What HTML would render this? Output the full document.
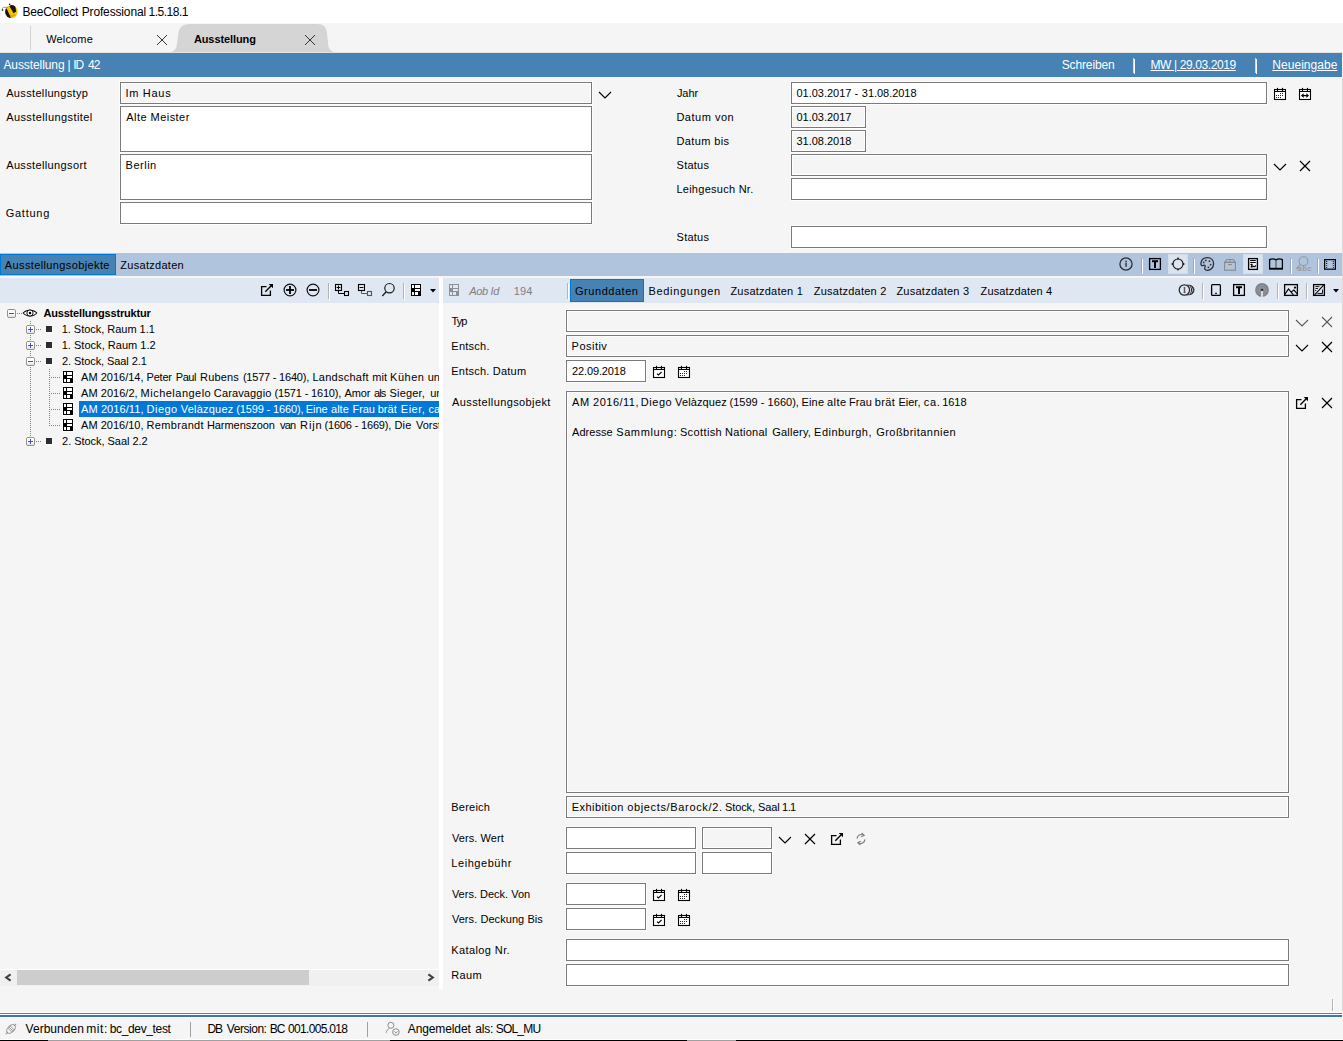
<!DOCTYPE html><html lang="de"><head><meta charset="utf-8"><title>BeeCollect Professional 1.5.18.1</title><style>
html,body{margin:0;padding:0}
body{width:1343px;height:1041px;position:relative;overflow:hidden;background:#f5f5f5;font-family:"Liberation Sans", sans-serif;font-size:11px;line-height:14px;color:#000}
#root div,#root span,#root svg{position:absolute}
#root{position:absolute;left:0;top:0;width:1343px;height:1041px;overflow:hidden}
.t{white-space:pre;font-size:11px;line-height:14px}
.f12{font-size:12px;line-height:15px}
.b{font-weight:bold}
.i{font-style:italic}
.w{color:#fff}
.g{color:#808080}
.u{text-decoration:underline;text-underline-offset:1px}
.fld{border:1px solid #7a7a7a;background:#fff;box-shadow:0 0 0 1px #fcfcfc}
.dis{background:#f5f5f5;box-shadow:0 0 0 1px #fcfcfc, inset 0 0 0 1px #fff}
</style></head><body><div id="root">
<div style="left:0px;top:0px;width:1343px;height:23px;background:#fff"></div>
<div style="left:30px;top:26px;width:1px;height:24px;background:#d4d4d4"></div>
<svg style="left:160px;top:23px" width="184" height="30" viewBox="160 23 184 30"><path d="M167 53 C172 52.6 175.6 50.4 176.6 46 L178.4 33 C179.4 27 183 24 190 24 L317 24 C324 24 326.2 27 327 33 L328.4 46 C329.4 50.4 333 52.6 338.5 53 Z" fill="#d5d5d5"/></svg>
<div style="left:0px;top:53px;width:1342px;height:24px;background:#4682b4"></div>
<div style="left:0px;top:52px;width:1342px;height:1px;background:#e6e2de"></div>
<div style="left:1133px;top:58px;width:1px;height:15px;background:#ddd6d0"></div>
<div style="left:1134px;top:59px;width:1px;height:15px;background:#fff"></div>
<div style="left:1255px;top:58px;width:1px;height:15px;background:#ddd6d0"></div>
<div style="left:1256px;top:59px;width:1px;height:15px;background:#fff"></div>
<div class="fld dis" style="left:120px;top:82px;width:470px;height:20px"></div>
<div class="fld" style="left:120px;top:106px;width:470px;height:44px"></div>
<div class="fld" style="left:120px;top:154px;width:470px;height:44px"></div>
<div class="fld" style="left:120px;top:202px;width:470px;height:20px"></div>
<div class="fld" style="left:791px;top:82px;width:474px;height:20px"></div>
<div class="fld dis" style="left:791px;top:106px;width:73px;height:20px"></div>
<div class="fld dis" style="left:791px;top:130px;width:73px;height:20px"></div>
<div class="fld dis" style="left:791px;top:154px;width:474px;height:20px"></div>
<div class="fld" style="left:791px;top:178px;width:474px;height:20px"></div>
<div class="fld" style="left:791px;top:226px;width:474px;height:20px"></div>
<div style="left:0px;top:253px;width:1342px;height:23px;background:#b0c4de"></div>
<div style="left:0px;top:254px;width:116px;height:21px;background:#4682b4;box-sizing:border-box;border:1px solid #0078d7"></div>
<div style="left:1168px;top:254px;width:20px;height:20px;background:#dce4f0;box-shadow:inset 0 0 2px 1px #d0dbeb"></div>
<div style="left:1243px;top:254px;width:20px;height:20px;background:#dce4f0;box-shadow:inset 0 0 2px 1px #d0dbeb"></div>
<div style="left:0px;top:278px;width:439px;height:25px;background:#dfe7f2"></div>
<div style="left:443px;top:278px;width:899px;height:25px;background:#dfe7f2"></div>
<div style="left:439px;top:278px;width:4px;height:711px;background:#fff"></div>
<div style="left:570px;top:279px;width:74px;height:23px;background:#4682b4;box-sizing:border-box;border:1px solid #0078d7"></div>
<div style="left:328px;top:283px;width:1px;height:16px;background:#b4b4b4"></div>
<div style="left:329px;top:284px;width:1px;height:16px;background:#fff"></div>
<div style="left:403px;top:283px;width:1px;height:16px;background:#b4b4b4"></div>
<div style="left:404px;top:284px;width:1px;height:16px;background:#fff"></div>
<div style="left:567px;top:283px;width:1px;height:16px;background:#b4b4b4"></div>
<div style="left:568px;top:284px;width:1px;height:16px;background:#fff"></div>
<div style="left:1202px;top:283px;width:1px;height:16px;background:#b4b4b4"></div>
<div style="left:1203px;top:284px;width:1px;height:16px;background:#fff"></div>
<div style="left:1277px;top:283px;width:1px;height:16px;background:#b4b4b4"></div>
<div style="left:1278px;top:284px;width:1px;height:16px;background:#fff"></div>
<div style="left:1306px;top:283px;width:1px;height:16px;background:#b4b4b4"></div>
<div style="left:1307px;top:284px;width:1px;height:16px;background:#fff"></div>
<div style="left:1141px;top:258px;width:1px;height:15px;background:#9ba6b8"></div>
<div style="left:1142px;top:259px;width:1px;height:15px;background:#fff"></div>
<div style="left:1193px;top:258px;width:1px;height:15px;background:#9ba6b8"></div>
<div style="left:1194px;top:259px;width:1px;height:15px;background:#fff"></div>
<div style="left:1290px;top:258px;width:1px;height:15px;background:#9ba6b8"></div>
<div style="left:1291px;top:259px;width:1px;height:15px;background:#fff"></div>
<div style="left:1317px;top:258px;width:1px;height:15px;background:#9ba6b8"></div>
<div style="left:1318px;top:259px;width:1px;height:15px;background:#fff"></div>
<div style="left:79px;top:401px;width:360px;height:16px;background:#0078d7"></div>
<div style="left:0px;top:969px;width:439px;height:17px;background:#f0f0f0"></div>
<div style="left:0px;top:969px;width:439px;height:1px;background:#fff"></div>
<div style="left:17px;top:970px;width:292px;height:15px;background:#cdcdcd"></div>
<div class="fld dis" style="left:566px;top:310px;width:721px;height:20px"></div>
<div class="fld dis" style="left:566px;top:335px;width:721px;height:20px"></div>
<div class="fld" style="left:566px;top:360px;width:78px;height:20px"></div>
<div class="fld dis" style="left:566px;top:391px;width:721px;height:400px"></div>
<div class="fld dis" style="left:566px;top:796px;width:721px;height:20px"></div>
<div class="fld" style="left:566px;top:827px;width:128px;height:20px"></div>
<div class="fld dis" style="left:702px;top:827px;width:68px;height:20px"></div>
<div class="fld" style="left:566px;top:852px;width:128px;height:20px"></div>
<div class="fld" style="left:702px;top:852px;width:68px;height:20px"></div>
<div class="fld" style="left:566px;top:883px;width:78px;height:20px"></div>
<div class="fld" style="left:566px;top:908px;width:78px;height:20px"></div>
<div class="fld" style="left:566px;top:939px;width:721px;height:20px"></div>
<div class="fld" style="left:566px;top:964px;width:721px;height:20px"></div>
<div style="left:1342px;top:77px;width:1px;height:935px;background:#dadada"></div>
<div style="left:0px;top:1012px;width:1342px;height:1px;background:#fff"></div>
<div style="left:0px;top:1013px;width:1342px;height:1px;background:#4a84b6"></div>
<div style="left:0px;top:1014px;width:1342px;height:1px;background:#fff"></div>
<div style="left:0px;top:1015px;width:1342px;height:2px;background:#3b78ae"></div>
<div style="left:0px;top:1017px;width:1342px;height:1px;background:#fbfbfb"></div>
<div style="left:190px;top:1022px;width:1px;height:15px;background:#a0a0a0"></div>
<div style="left:367px;top:1022px;width:1px;height:15px;background:#a0a0a0"></div>
<div style="left:1332px;top:999px;width:1px;height:12px;background:#b4b4b4"></div>
<div style="left:1333px;top:1000px;width:1px;height:12px;background:#fff"></div>
<div style="left:0px;top:1039px;width:1343px;height:1px;background:#fff"></div>
<div style="left:0px;top:1040px;width:1343px;height:1px;background:#000"></div>
<div style="left:48px;top:1040px;width:342px;height:1px;background:#a0a0a0"></div>
<div style="left:687px;top:1040px;width:49px;height:1px;background:#a0a0a0"></div>
<svg style="left:0px;top:0px" width="22" height="22" viewBox="0 0 22 22" ><defs><clipPath id="beec"><ellipse cx="11.4" cy="11.7" rx="6.3" ry="6.6"/></clipPath></defs><g clip-path="url(#beec)"><rect x="3" y="3" width="18" height="18" fill="#f6c30a"/><path d="M2 8.8 L6.6 8.4 L10.8 17.6 L9 20 L2 20 Z" fill="#17120f"/><path d="M9.3 6 L13.6 13.2 L16.2 11.4 L14.8 4 L10 3 Z" fill="#17120f"/><path d="M10 15 L12.5 16.5 L14 14.5 L15.5 16" stroke="#b8860b" stroke-width=".7" fill="none"/></g><path d="M8 7.4 L3.2 7.4 Q2.4 7.6 2.4 9" stroke="#888" stroke-width=".8" fill="none"/><ellipse cx="2.5" cy="10" rx=".8" ry="1.1" fill="#333"/><circle cx="9" cy="4.6" r="1.6" fill="#fff"/><circle cx="9.6" cy="4.4" r=".8" fill="#111"/></svg>
<svg style="left:155px;top:33px" width="14" height="14" viewBox="155 33 14 14" ><line x1="157" y1="35" x2="167" y2="45" stroke="#333" stroke-width="1.0" stroke-linecap="butt"/><line x1="167" y1="35" x2="157" y2="45" stroke="#333" stroke-width="1.0" stroke-linecap="butt"/></svg>
<svg style="left:303px;top:33px" width="14" height="14" viewBox="303 33 14 14" ><line x1="305" y1="35" x2="315" y2="45" stroke="#333" stroke-width="1.0" stroke-linecap="butt"/><line x1="315" y1="35" x2="305" y2="45" stroke="#333" stroke-width="1.0" stroke-linecap="butt"/></svg>
<svg style="left:597px;top:90px" width="16" height="10" viewBox="597 90 16 10" ><path d="M599 92 L605 98 L611 92" fill="none" stroke="#000" stroke-width="1.15" /></svg>
<svg style="left:1272px;top:86px" width="16" height="16" viewBox="1272 86 16 16" ><rect x="1273.2" y="88.2" width="13.6" height="12.6" fill="#fdfdfd" rx="1"/><rect x="1276.4" y="87" width="2.2" height="2" fill="#fdfdfd"/><rect x="1281.4" y="87" width="2.2" height="2" fill="#fdfdfd"/><rect x="1274.5" y="89.5" width="11" height="10" fill="#fff" stroke="#000" stroke-width="1.12"/><line x1="1275" y1="91.5" x2="1285" y2="91.5" stroke="#000" stroke-width="1.0" stroke-linecap="butt"/><line x1="1277.5" y1="87.8" x2="1277.5" y2="91.2" stroke="#000" stroke-width="1.1" stroke-linecap="butt"/><line x1="1282.5" y1="87.8" x2="1282.5" y2="91.2" stroke="#000" stroke-width="1.1" stroke-linecap="butt"/><circle cx="1280.5" cy="93.5" r="0.55" fill="#000"/><circle cx="1282.5" cy="93.5" r="0.55" fill="#000"/><circle cx="1276.5" cy="95.5" r="0.55" fill="#000"/><circle cx="1278.5" cy="95.5" r="0.55" fill="#000"/><circle cx="1280.5" cy="95.5" r="0.55" fill="#000"/><circle cx="1282.5" cy="95.5" r="0.55" fill="#000"/><circle cx="1276.5" cy="97.5" r="0.55" fill="#000"/><circle cx="1278.5" cy="97.5" r="0.55" fill="#000"/><circle cx="1280.5" cy="97.5" r="0.55" fill="#000"/></svg>
<svg style="left:1297px;top:86px" width="16" height="16" viewBox="1297 86 16 16" ><rect x="1298.2" y="88.2" width="13.6" height="12.6" fill="#fdfdfd" rx="1"/><rect x="1301.4" y="87" width="2.2" height="2" fill="#fdfdfd"/><rect x="1306.4" y="87" width="2.2" height="2" fill="#fdfdfd"/><rect x="1299.5" y="89.5" width="11" height="10" fill="#fff" stroke="#000" stroke-width="1.12"/><line x1="1300" y1="91.5" x2="1310" y2="91.5" stroke="#000" stroke-width="1.0" stroke-linecap="butt"/><line x1="1302.5" y1="87.8" x2="1302.5" y2="91.2" stroke="#000" stroke-width="1.1" stroke-linecap="butt"/><line x1="1307.5" y1="87.8" x2="1307.5" y2="91.2" stroke="#000" stroke-width="1.1" stroke-linecap="butt"/><line x1="1302" y1="95.6" x2="1308" y2="95.6" stroke="#000" stroke-width="1.3" stroke-linecap="butt"/><path d="M1301 95.6 L1303.6 93.2 L1303.6 98 Z" fill="#000" /><path d="M1309 95.6 L1306.4 93.2 L1306.4 98 Z" fill="#000" /></svg>
<svg style="left:1272px;top:162px" width="16" height="10" viewBox="1272 162 16 10" ><path d="M1274 164 L1280 170 L1286 164" fill="none" stroke="#000" stroke-width="1.15" /></svg>
<svg style="left:1298px;top:159px" width="14" height="14" viewBox="1298 159 14 14" ><line x1="1300" y1="161" x2="1310" y2="171" stroke="#000" stroke-width="1.15" stroke-linecap="butt"/><line x1="1310" y1="161" x2="1300" y2="171" stroke="#000" stroke-width="1.15" stroke-linecap="butt"/></svg>
<svg style="left:1118px;top:256px" width="16" height="16" viewBox="1118 256 16 16" ><circle cx="1126" cy="264" r="6.1" fill="none" stroke="#2b2b2b" stroke-width="1.25"/><rect x="1125.3" y="262.6" width="1.5" height="4.2" fill="#3a3a3a"/><rect x="1125.3" y="260.6" width="1.5" height="1.4" fill="#3a3a3a"/></svg>
<svg style="left:1148px;top:257px" width="14" height="14" viewBox="1148 257 14 14" ><rect x="1149.6" y="258.6" width="10.8" height="10.8" fill="none" stroke="#000" stroke-width="1.3"/><rect x="1152" y="260.2" width="6" height="2" fill="#000"/><rect x="1154" y="262" width="2" height="6" fill="#000"/></svg>
<svg style="left:1170px;top:256px" width="16" height="16" viewBox="1170 256 16 16" ><circle cx="1178" cy="264" r="5" fill="none" stroke="#1a1a1a" stroke-width="1.15"/><circle cx="1178" cy="258.5" r="0.95" fill="#1a1a1a"/><circle cx="1178" cy="269.6" r="0.95" fill="#1a1a1a"/><circle cx="1172.4" cy="264" r="0.95" fill="#1a1a1a"/><circle cx="1183.6" cy="264" r="0.95" fill="#1a1a1a"/></svg>
<svg style="left:1199px;top:256px" width="16" height="16" viewBox="1199 256 16 16" ><path d="M1207.4 257.6 C1211.2 257.6 1213.6 260.4 1213.6 263.8 C1213.6 267.6 1210.6 270.3 1207.4 270.3 C1204.6 270.3 1204.2 268.6 1205 267.2 C1205.8 265.8 1204.6 264.8 1203.4 265.3 C1201.6 266 1200.7 265 1200.9 263.2 C1201.3 260 1203.8 257.6 1207.4 257.6 Z" fill="none" stroke="#2b2b2b" stroke-width="1.25" /><circle cx="1205.8" cy="260.4" r="0.85" fill="#2b2b2b"/><circle cx="1209.4" cy="261.2" r="0.85" fill="#2b2b2b"/><circle cx="1210.6" cy="264.7" r="0.85" fill="#2b2b2b"/><circle cx="1208.4" cy="267.3" r="0.85" fill="#2b2b2b"/><circle cx="1203.7" cy="262.4" r="0.85" fill="#2b2b2b"/></svg>
<svg style="left:1223px;top:258px" width="14" height="14" viewBox="1223 258 14 14" ><path d="M1224.6 262.4 L1226.8 259.5 L1233.2 259.5 L1235.4 262.4 Z" fill="none" stroke="#8a8a8a" stroke-width="1.1" stroke-linejoin="round"/><rect x="1224.6" y="262.4" width="10.8" height="7.8" fill="none" stroke="#8a8a8a" stroke-width="1.1"/><line x1="1230" y1="259.5" x2="1230" y2="262.4" stroke="#8a8a8a" stroke-width="1" stroke-linecap="butt"/><line x1="1228" y1="264.6" x2="1232" y2="264.6" stroke="#8a8a8a" stroke-width="1" stroke-linecap="butt"/></svg>
<svg style="left:1247px;top:257px" width="12" height="14" viewBox="1247 257 12 14" ><rect x="1248.6" y="258.6" width="8.8" height="10.8" fill="#e9eef6" stroke="#000" stroke-width="1.3"/><line x1="1250.2" y1="260.5" x2="1255.8" y2="260.5" stroke="#000" stroke-width="1" stroke-linecap="butt"/><line x1="1250.2" y1="262.5" x2="1255.8" y2="262.5" stroke="#000" stroke-width="1" stroke-linecap="butt"/><path d="M1250.6 265 C1251.6 263.6 1252.8 264.6 1251.8 265.8 C1251 266.8 1250.4 267.2 1252.6 266.8 C1253.6 265.6 1254 266.8 1254.6 266.6 C1255.2 266.4 1255.4 265.8 1256 265.6" fill="none" stroke="#000" stroke-width="1.15" /></svg>
<svg style="left:1268px;top:257px" width="16" height="14" viewBox="1268 257 16 14" ><path d="M1269.6 259.6 Q1272.8 258.2 1276 259.8 Q1279.2 258.2 1282.4 259.6 L1282.4 268.6 L1269.6 268.6 Z" fill="none" stroke="#000" stroke-width="1.3" stroke-linejoin="round"/><line x1="1276" y1="259.8" x2="1276" y2="268.6" stroke="#444" stroke-width="1" stroke-linecap="butt"/><rect x="1269" y="267.8" width="14" height="1.8" fill="#000"/></svg>
<svg style="left:1295px;top:255px" width="18" height="18" viewBox="1295 255 18 18" ><circle cx="1303.5" cy="261.2" r="4.4" fill="none" stroke="#96989c" stroke-width="1.1"/><line x1="1300.3" y1="264.6" x2="1296.2" y2="268.8" stroke="#96989c" stroke-width="1.1" stroke-linecap="butt"/><text x="1297.6" y="270.8" font-family="Liberation Sans, sans-serif" font-size="7.6" letter-spacing=".7" fill="#96989c" stroke="#96989c" stroke-width=".2">abc</text></svg>
<svg style="left:1323px;top:258px" width="14" height="13" viewBox="1323 258 14 13" ><rect x="1324.6" y="259.6" width="10.8" height="9.6" fill="none" stroke="#000" stroke-width="1.2"/><circle cx="1326.7" cy="261.4" r="0.55" fill="#000"/><circle cx="1333.3" cy="261.4" r="0.55" fill="#000"/><circle cx="1326.7" cy="263.4" r="0.55" fill="#000"/><circle cx="1333.3" cy="263.4" r="0.55" fill="#000"/><circle cx="1326.7" cy="265.5" r="0.55" fill="#000"/><circle cx="1333.3" cy="265.5" r="0.55" fill="#000"/><circle cx="1326.7" cy="267.5" r="0.55" fill="#000"/><circle cx="1333.3" cy="267.5" r="0.55" fill="#000"/></svg>
<svg style="left:259px;top:282px" width="18" height="18" viewBox="259 282 18 18" ><path d="M266.5 286.6 L261.6 286.6 L261.6 295.4 L270.4 295.4 L270.4 290.5" fill="none" stroke="#000" stroke-width="1.3" /><line x1="265.3" y1="291.7" x2="271.5" y2="285.5" stroke="#000" stroke-width="1.4" stroke-linecap="butt"/><path d="M268.7 284 L273 284 L273 288.3 Z" fill="#000" /></svg>
<svg style="left:282px;top:282px" width="16" height="16" viewBox="282 282 16 16" ><circle cx="290" cy="290" r="5.9" fill="none" stroke="#111" stroke-width="1.2"/><rect x="286" y="289.1" width="8" height="1.8" fill="#000"/><rect x="289.1" y="286" width="1.8" height="8" fill="#000"/></svg>
<svg style="left:305px;top:282px" width="16" height="16" viewBox="305 282 16 16" ><circle cx="313" cy="290" r="5.9" fill="none" stroke="#111" stroke-width="1.2"/><rect x="309" y="289.1" width="8" height="1.8" fill="#000"/></svg>
<svg style="left:334px;top:283px" width="16" height="14" viewBox="334 283 16 14" ><rect x="335.5" y="284.5" width="6" height="6" fill="none" stroke="#000" stroke-width="1.1"/><line x1="336.6" y1="287.5" x2="340.4" y2="287.5" stroke="#000" stroke-width="1" stroke-linecap="butt"/><line x1="338.5" y1="285.6" x2="338.5" y2="289.4" stroke="#000" stroke-width="1" stroke-linecap="butt"/><path d="M338.5 291 L338.5 293.5 L344 293.5" fill="none" stroke="#000" stroke-width="1" /><rect x="344.5" y="291.5" width="4" height="4" fill="none" stroke="#000" stroke-width="1.1"/></svg>
<svg style="left:357px;top:283px" width="16" height="14" viewBox="357 283 16 14" ><rect x="358.5" y="284.5" width="6" height="6" fill="none" stroke="#000" stroke-width="1.1"/><line x1="359.6" y1="287.5" x2="363.4" y2="287.5" stroke="#000" stroke-width="1" stroke-linecap="butt"/><path d="M361.5 291 L361.5 293.5 L367 293.5" fill="none" stroke="#555" stroke-width="1" /><rect x="367.5" y="291.5" width="4" height="4" fill="none" stroke="#555" stroke-width="1.1"/></svg>
<svg style="left:381px;top:282px" width="15" height="15" viewBox="381 282 15 15" ><circle cx="389.5" cy="288.2" r="4.7" fill="none" stroke="#1a1a1a" stroke-width="1.2"/><line x1="386.2" y1="291.8" x2="382.3" y2="296" stroke="#1a1a1a" stroke-width="1.3" stroke-linecap="butt"/></svg>
<svg style="left:410px;top:283px" width="12" height="14" viewBox="410 283 12 14" ><rect x="411" y="284" width="10" height="12" fill="#000"/><rect x="412" y="285" width="2" height="3" fill="#fff"/><rect x="415" y="285" width="5" height="3" fill="#fff"/><rect x="415" y="289" width="5" height="2" fill="#fff"/><rect x="412" y="292" width="2" height="3" fill="#fff"/><rect x="415" y="292" width="3" height="3" fill="#fff"/></svg>
<svg style="left:428.5px;top:288px" width="9" height="6" viewBox="428.5 288 9 6" ><path d="M429.5 289 L435.5 289 L432.5 292.4 Z" fill="#000" /></svg>
<svg style="left:448px;top:283px" width="12" height="14" viewBox="448 283 12 14" ><rect x="449" y="284" width="10" height="12" fill="#8e9094"/><rect x="450" y="285" width="2" height="3" fill="#dfe7f2"/><rect x="453" y="285" width="5" height="3" fill="#dfe7f2"/><rect x="453" y="289" width="5" height="2" fill="#dfe7f2"/><rect x="450" y="292" width="2" height="3" fill="#dfe7f2"/><rect x="453" y="292" width="3" height="3" fill="#dfe7f2"/></svg>
<svg style="left:1178px;top:283px" width="18" height="14" viewBox="1178 283 18 14" ><circle cx="1184.4" cy="290" r="5.2" fill="none" stroke="#2a2a2a" stroke-width="1.3"/><path d="M1187.4 284.9 A5.2 5.2 0 0 1 1187.4 295.1 M1189.6 285 A5.2 5.2 0 0 1 1189.6 295 M1191.4 285.6 A5 5 0 0 1 1191.4 294.4" fill="none" stroke="#2a2a2a" stroke-width="1" /><text x="1182.6" y="292.6" font-family="Liberation Serif, serif" font-size="7.5" font-weight="bold" fill="#3a3a3a">1</text></svg>
<svg style="left:1210px;top:283px" width="12" height="14" viewBox="1210 283 12 14" ><rect x="1211.6" y="284.6" width="8.8" height="10.8" fill="none" stroke="#000" stroke-width="1.3" rx="1"/><rect x="1215" y="292.8" width="2" height="1" fill="#000"/></svg>
<svg style="left:1232px;top:283px" width="14" height="14" viewBox="1232 283 14 14" ><rect x="1233.6" y="284.6" width="10.8" height="10.8" fill="none" stroke="#000" stroke-width="1.3"/><rect x="1236" y="286.2" width="6" height="2" fill="#000"/><rect x="1238" y="288" width="2" height="6" fill="#000"/></svg>
<svg style="left:1254px;top:282px" width="16" height="16" viewBox="1254 282 16 16" ><circle cx="1262" cy="290" r="6.9" fill="#808389"/><circle cx="1262" cy="290" r="4.6" fill="none" stroke="#9ba0a8" stroke-width="0.7"/><circle cx="1262" cy="290" r="2.8" fill="none" stroke="#9ba0a8" stroke-width="0.7"/><rect x="1261.2" y="290" width="1.6" height="7.2" fill="#e8edf5"/><circle cx="1262" cy="290" r="1.1" fill="#16181c"/></svg>
<svg style="left:1283px;top:283px" width="16" height="14" viewBox="1283 283 16 14" ><rect x="1284.6" y="284.6" width="12.8" height="10.8" fill="none" stroke="#000" stroke-width="1.3"/><path d="M1284.8 294.4 L1288.5 288.9 L1293.4 294.8 M1291.4 291.9 L1293.9 290 L1297.3 293.8" fill="none" stroke="#000" stroke-width="1.15" /><circle cx="1295" cy="287.6" r="1.15" fill="#000"/></svg>
<svg style="left:1312px;top:283px" width="14" height="14" viewBox="1312 283 14 14" ><rect x="1313.6" y="284.6" width="10.8" height="10.8" fill="none" stroke="#000" stroke-width="1.3"/><line x1="1323.6" y1="285.2" x2="1314.6" y2="294.8" stroke="#000" stroke-width="1.1" stroke-linecap="butt"/><line x1="1315.4" y1="286.6" x2="1319.4" y2="286.6" stroke="#000" stroke-width="0.9" stroke-linecap="butt"/><line x1="1315.4" y1="288.5" x2="1318" y2="288.5" stroke="#000" stroke-width="0.9" stroke-linecap="butt"/><rect x="1315.2" y="290" width="1" height="1" fill="#000"/><path d="M1322.5 289.5 L1322.5 293.5 L1317.5 293.5" fill="none" stroke="#000" stroke-width="0.9" /></svg>
<svg style="left:1331.7px;top:288px" width="9" height="6" viewBox="1331.7 288 9 6" ><path d="M1332.7 289 L1338.7 289 L1335.7 292.4 Z" fill="#000" /></svg>
<svg style="left:7px;top:309px" width="9" height="9" viewBox="7 309 9 9" ><defs><linearGradient id="eg7_309" x1="0" y1="0" x2="0" y2="1"><stop offset=".5" stop-color="#fff"/><stop offset="1" stop-color="#dcdcdc"/></linearGradient></defs><rect x="7.5" y="309.5" width="8" height="8" rx="1.3" fill="url(#eg7_309)" stroke="#919191"/><rect x="9" y="313" width="5" height="1" fill="#3f55a5"/></svg>
<svg style="left:26px;top:325px" width="9" height="9" viewBox="26 325 9 9" ><defs><linearGradient id="eg26_325" x1="0" y1="0" x2="0" y2="1"><stop offset=".5" stop-color="#fff"/><stop offset="1" stop-color="#dcdcdc"/></linearGradient></defs><rect x="26.5" y="325.5" width="8" height="8" rx="1.3" fill="url(#eg26_325)" stroke="#919191"/><rect x="28" y="329" width="5" height="1" fill="#3f55a5"/><rect x="30" y="327" width="1" height="5" fill="#3f55a5"/></svg>
<svg style="left:26px;top:341px" width="9" height="9" viewBox="26 341 9 9" ><defs><linearGradient id="eg26_341" x1="0" y1="0" x2="0" y2="1"><stop offset=".5" stop-color="#fff"/><stop offset="1" stop-color="#dcdcdc"/></linearGradient></defs><rect x="26.5" y="341.5" width="8" height="8" rx="1.3" fill="url(#eg26_341)" stroke="#919191"/><rect x="28" y="345" width="5" height="1" fill="#3f55a5"/><rect x="30" y="343" width="1" height="5" fill="#3f55a5"/></svg>
<svg style="left:26px;top:357px" width="9" height="9" viewBox="26 357 9 9" ><defs><linearGradient id="eg26_357" x1="0" y1="0" x2="0" y2="1"><stop offset=".5" stop-color="#fff"/><stop offset="1" stop-color="#dcdcdc"/></linearGradient></defs><rect x="26.5" y="357.5" width="8" height="8" rx="1.3" fill="url(#eg26_357)" stroke="#919191"/><rect x="28" y="361" width="5" height="1" fill="#3f55a5"/></svg>
<svg style="left:26px;top:437px" width="9" height="9" viewBox="26 437 9 9" ><defs><linearGradient id="eg26_437" x1="0" y1="0" x2="0" y2="1"><stop offset=".5" stop-color="#fff"/><stop offset="1" stop-color="#dcdcdc"/></linearGradient></defs><rect x="26.5" y="437.5" width="8" height="8" rx="1.3" fill="url(#eg26_437)" stroke="#919191"/><rect x="28" y="441" width="5" height="1" fill="#3f55a5"/><rect x="30" y="439" width="1" height="5" fill="#3f55a5"/></svg>
<svg style="left:0px;top:303px" width="80" height="150" viewBox="0 303 80 150" shape-rendering="crispEdges"><rect x="17" y="313" width="1" height="1" fill="#808080"/><rect x="19" y="313" width="1" height="1" fill="#808080"/><rect x="21" y="313" width="1" height="1" fill="#808080"/><rect x="30" y="321" width="1" height="1" fill="#808080"/><rect x="30" y="323" width="1" height="1" fill="#808080"/><rect x="30" y="335" width="1" height="1" fill="#808080"/><rect x="30" y="337" width="1" height="1" fill="#808080"/><rect x="30" y="339" width="1" height="1" fill="#808080"/><rect x="30" y="351" width="1" height="1" fill="#808080"/><rect x="30" y="353" width="1" height="1" fill="#808080"/><rect x="30" y="355" width="1" height="1" fill="#808080"/><rect x="30" y="367" width="1" height="1" fill="#808080"/><rect x="30" y="369" width="1" height="1" fill="#808080"/><rect x="30" y="371" width="1" height="1" fill="#808080"/><rect x="30" y="373" width="1" height="1" fill="#808080"/><rect x="30" y="375" width="1" height="1" fill="#808080"/><rect x="30" y="377" width="1" height="1" fill="#808080"/><rect x="30" y="379" width="1" height="1" fill="#808080"/><rect x="30" y="381" width="1" height="1" fill="#808080"/><rect x="30" y="383" width="1" height="1" fill="#808080"/><rect x="30" y="385" width="1" height="1" fill="#808080"/><rect x="30" y="387" width="1" height="1" fill="#808080"/><rect x="30" y="389" width="1" height="1" fill="#808080"/><rect x="30" y="391" width="1" height="1" fill="#808080"/><rect x="30" y="393" width="1" height="1" fill="#808080"/><rect x="30" y="395" width="1" height="1" fill="#808080"/><rect x="30" y="397" width="1" height="1" fill="#808080"/><rect x="30" y="399" width="1" height="1" fill="#808080"/><rect x="30" y="401" width="1" height="1" fill="#808080"/><rect x="30" y="403" width="1" height="1" fill="#808080"/><rect x="30" y="405" width="1" height="1" fill="#808080"/><rect x="30" y="407" width="1" height="1" fill="#808080"/><rect x="30" y="409" width="1" height="1" fill="#808080"/><rect x="30" y="411" width="1" height="1" fill="#808080"/><rect x="30" y="413" width="1" height="1" fill="#808080"/><rect x="30" y="415" width="1" height="1" fill="#808080"/><rect x="30" y="417" width="1" height="1" fill="#808080"/><rect x="30" y="419" width="1" height="1" fill="#808080"/><rect x="30" y="421" width="1" height="1" fill="#808080"/><rect x="30" y="423" width="1" height="1" fill="#808080"/><rect x="30" y="425" width="1" height="1" fill="#808080"/><rect x="30" y="427" width="1" height="1" fill="#808080"/><rect x="30" y="429" width="1" height="1" fill="#808080"/><rect x="30" y="431" width="1" height="1" fill="#808080"/><rect x="30" y="433" width="1" height="1" fill="#808080"/><rect x="30" y="435" width="1" height="1" fill="#808080"/><rect x="36" y="329" width="1" height="1" fill="#808080"/><rect x="38" y="329" width="1" height="1" fill="#808080"/><rect x="40" y="329" width="1" height="1" fill="#808080"/><rect x="36" y="345" width="1" height="1" fill="#808080"/><rect x="38" y="345" width="1" height="1" fill="#808080"/><rect x="40" y="345" width="1" height="1" fill="#808080"/><rect x="36" y="361" width="1" height="1" fill="#808080"/><rect x="38" y="361" width="1" height="1" fill="#808080"/><rect x="40" y="361" width="1" height="1" fill="#808080"/><rect x="36" y="441" width="1" height="1" fill="#808080"/><rect x="38" y="441" width="1" height="1" fill="#808080"/><rect x="40" y="441" width="1" height="1" fill="#808080"/><rect x="49" y="369" width="1" height="1" fill="#808080"/><rect x="49" y="371" width="1" height="1" fill="#808080"/><rect x="49" y="373" width="1" height="1" fill="#808080"/><rect x="49" y="375" width="1" height="1" fill="#808080"/><rect x="49" y="377" width="1" height="1" fill="#808080"/><rect x="49" y="379" width="1" height="1" fill="#808080"/><rect x="49" y="381" width="1" height="1" fill="#808080"/><rect x="49" y="383" width="1" height="1" fill="#808080"/><rect x="49" y="385" width="1" height="1" fill="#808080"/><rect x="49" y="387" width="1" height="1" fill="#808080"/><rect x="49" y="389" width="1" height="1" fill="#808080"/><rect x="49" y="391" width="1" height="1" fill="#808080"/><rect x="49" y="393" width="1" height="1" fill="#808080"/><rect x="49" y="395" width="1" height="1" fill="#808080"/><rect x="49" y="397" width="1" height="1" fill="#808080"/><rect x="49" y="399" width="1" height="1" fill="#808080"/><rect x="49" y="401" width="1" height="1" fill="#808080"/><rect x="49" y="403" width="1" height="1" fill="#808080"/><rect x="49" y="405" width="1" height="1" fill="#808080"/><rect x="49" y="407" width="1" height="1" fill="#808080"/><rect x="49" y="409" width="1" height="1" fill="#808080"/><rect x="49" y="411" width="1" height="1" fill="#808080"/><rect x="49" y="413" width="1" height="1" fill="#808080"/><rect x="49" y="415" width="1" height="1" fill="#808080"/><rect x="49" y="417" width="1" height="1" fill="#808080"/><rect x="49" y="419" width="1" height="1" fill="#808080"/><rect x="49" y="421" width="1" height="1" fill="#808080"/><rect x="49" y="423" width="1" height="1" fill="#808080"/><rect x="49" y="425" width="1" height="1" fill="#808080"/><rect x="51" y="377" width="1" height="1" fill="#808080"/><rect x="53" y="377" width="1" height="1" fill="#808080"/><rect x="55" y="377" width="1" height="1" fill="#808080"/><rect x="57" y="377" width="1" height="1" fill="#808080"/><rect x="59" y="377" width="1" height="1" fill="#808080"/><rect x="51" y="393" width="1" height="1" fill="#808080"/><rect x="53" y="393" width="1" height="1" fill="#808080"/><rect x="55" y="393" width="1" height="1" fill="#808080"/><rect x="57" y="393" width="1" height="1" fill="#808080"/><rect x="59" y="393" width="1" height="1" fill="#808080"/><rect x="51" y="409" width="1" height="1" fill="#808080"/><rect x="53" y="409" width="1" height="1" fill="#808080"/><rect x="55" y="409" width="1" height="1" fill="#808080"/><rect x="57" y="409" width="1" height="1" fill="#808080"/><rect x="59" y="409" width="1" height="1" fill="#808080"/><rect x="51" y="425" width="1" height="1" fill="#808080"/><rect x="53" y="425" width="1" height="1" fill="#808080"/><rect x="55" y="425" width="1" height="1" fill="#808080"/><rect x="57" y="425" width="1" height="1" fill="#808080"/><rect x="59" y="425" width="1" height="1" fill="#808080"/></svg>
<svg style="left:45px;top:325px" width="8" height="8" viewBox="45 325 8 8" ><rect x="45" y="325" width="8" height="8" fill="#fbfbfb"/><rect x="46" y="326" width="6" height="6" fill="#2d2d2d"/></svg>
<svg style="left:45px;top:341px" width="8" height="8" viewBox="45 341 8 8" ><rect x="45" y="341" width="8" height="8" fill="#fbfbfb"/><rect x="46" y="342" width="6" height="6" fill="#2d2d2d"/></svg>
<svg style="left:45px;top:357px" width="8" height="8" viewBox="45 357 8 8" ><rect x="45" y="357" width="8" height="8" fill="#fbfbfb"/><rect x="46" y="358" width="6" height="6" fill="#2d2d2d"/></svg>
<svg style="left:45px;top:437px" width="8" height="8" viewBox="45 437 8 8" ><rect x="45" y="437" width="8" height="8" fill="#fbfbfb"/><rect x="46" y="438" width="6" height="6" fill="#2d2d2d"/></svg>
<svg style="left:22px;top:307px" width="16" height="12" viewBox="22 307 16 12" ><path d="M23.2 313 C26.2 309.2 33.8 309.2 36.8 313 C33.8 316.9 26.2 316.9 23.2 313 Z" fill="#fff" stroke="#000" stroke-width="1.05" /><circle cx="30" cy="313" r="3.1" fill="#fff" stroke="#000" stroke-width="0.9"/><circle cx="30" cy="312.9" r="1.25" fill="#000"/></svg>
<svg style="left:62px;top:370px" width="12" height="14" viewBox="62 370 12 14" ><rect x="62" y="370" width="12" height="14" fill="#fff" rx="1"/><rect x="63" y="371" width="10" height="12" fill="#000"/><rect x="64" y="372" width="2" height="3" fill="#fff"/><rect x="67" y="372" width="5" height="3" fill="#fff"/><rect x="67" y="376" width="5" height="2" fill="#fff"/><rect x="64" y="379" width="2" height="3" fill="#fff"/><rect x="67" y="379" width="3" height="3" fill="#fff"/></svg>
<svg style="left:62px;top:386px" width="12" height="14" viewBox="62 386 12 14" ><rect x="62" y="386" width="12" height="14" fill="#fff" rx="1"/><rect x="63" y="387" width="10" height="12" fill="#000"/><rect x="64" y="388" width="2" height="3" fill="#fff"/><rect x="67" y="388" width="5" height="3" fill="#fff"/><rect x="67" y="392" width="5" height="2" fill="#fff"/><rect x="64" y="395" width="2" height="3" fill="#fff"/><rect x="67" y="395" width="3" height="3" fill="#fff"/></svg>
<svg style="left:62px;top:402px" width="12" height="14" viewBox="62 402 12 14" ><rect x="62" y="402" width="12" height="14" fill="#fff" rx="1"/><rect x="63" y="403" width="10" height="12" fill="#000"/><rect x="64" y="404" width="2" height="3" fill="#fff"/><rect x="67" y="404" width="5" height="3" fill="#fff"/><rect x="67" y="408" width="5" height="2" fill="#fff"/><rect x="64" y="411" width="2" height="3" fill="#fff"/><rect x="67" y="411" width="3" height="3" fill="#fff"/></svg>
<svg style="left:62px;top:418px" width="12" height="14" viewBox="62 418 12 14" ><rect x="62" y="418" width="12" height="14" fill="#fff" rx="1"/><rect x="63" y="419" width="10" height="12" fill="#000"/><rect x="64" y="420" width="2" height="3" fill="#fff"/><rect x="67" y="420" width="5" height="3" fill="#fff"/><rect x="67" y="424" width="5" height="2" fill="#fff"/><rect x="64" y="427" width="2" height="3" fill="#fff"/><rect x="67" y="427" width="3" height="3" fill="#fff"/></svg>
<svg style="left:1294px;top:318px" width="16" height="10" viewBox="1294 318 16 10" ><path d="M1296 320 L1302 326 L1308 320" fill="none" stroke="#5a5a5a" stroke-width="1.1" /></svg>
<svg style="left:1320px;top:315px" width="14" height="14" viewBox="1320 315 14 14" ><line x1="1322" y1="317" x2="1332" y2="327" stroke="#5a5a5a" stroke-width="1.1" stroke-linecap="butt"/><line x1="1332" y1="317" x2="1322" y2="327" stroke="#5a5a5a" stroke-width="1.1" stroke-linecap="butt"/></svg>
<svg style="left:1294px;top:343px" width="16" height="10" viewBox="1294 343 16 10" ><path d="M1296 345 L1302 351 L1308 345" fill="none" stroke="#000" stroke-width="1.15" /></svg>
<svg style="left:1320px;top:340px" width="14" height="14" viewBox="1320 340 14 14" ><line x1="1322" y1="342" x2="1332" y2="352" stroke="#000" stroke-width="1.15" stroke-linecap="butt"/><line x1="1332" y1="342" x2="1322" y2="352" stroke="#000" stroke-width="1.15" stroke-linecap="butt"/></svg>
<svg style="left:651px;top:364px" width="16" height="16" viewBox="651 364 16 16" ><rect x="652.2" y="366.2" width="13.6" height="12.6" fill="#fdfdfd" rx="1"/><rect x="655.4" y="365" width="2.2" height="2" fill="#fdfdfd"/><rect x="660.4" y="365" width="2.2" height="2" fill="#fdfdfd"/><rect x="653.5" y="367.5" width="11" height="10" fill="#fff" stroke="#000" stroke-width="1.12"/><line x1="654" y1="369.5" x2="664" y2="369.5" stroke="#000" stroke-width="1.0" stroke-linecap="butt"/><line x1="656.5" y1="365.8" x2="656.5" y2="369.2" stroke="#000" stroke-width="1.1" stroke-linecap="butt"/><line x1="661.5" y1="365.8" x2="661.5" y2="369.2" stroke="#000" stroke-width="1.1" stroke-linecap="butt"/><path d="M657 373.6 L658.5 375 L661.6 371.8" fill="none" stroke="#000" stroke-width="1.15" /></svg>
<svg style="left:676px;top:364px" width="16" height="16" viewBox="676 364 16 16" ><rect x="677.2" y="366.2" width="13.6" height="12.6" fill="#fdfdfd" rx="1"/><rect x="680.4" y="365" width="2.2" height="2" fill="#fdfdfd"/><rect x="685.4" y="365" width="2.2" height="2" fill="#fdfdfd"/><rect x="678.5" y="367.5" width="11" height="10" fill="#fff" stroke="#000" stroke-width="1.12"/><line x1="679" y1="369.5" x2="689" y2="369.5" stroke="#000" stroke-width="1.0" stroke-linecap="butt"/><line x1="681.5" y1="365.8" x2="681.5" y2="369.2" stroke="#000" stroke-width="1.1" stroke-linecap="butt"/><line x1="686.5" y1="365.8" x2="686.5" y2="369.2" stroke="#000" stroke-width="1.1" stroke-linecap="butt"/><circle cx="684.5" cy="371.5" r="0.55" fill="#000"/><circle cx="686.5" cy="371.5" r="0.55" fill="#000"/><circle cx="680.5" cy="373.5" r="0.55" fill="#000"/><circle cx="682.5" cy="373.5" r="0.55" fill="#000"/><circle cx="684.5" cy="373.5" r="0.55" fill="#000"/><circle cx="686.5" cy="373.5" r="0.55" fill="#000"/><circle cx="680.5" cy="375.5" r="0.55" fill="#000"/><circle cx="682.5" cy="375.5" r="0.55" fill="#000"/><circle cx="684.5" cy="375.5" r="0.55" fill="#000"/></svg>
<svg style="left:1294px;top:395px" width="18" height="18" viewBox="1294 395 18 18" ><path d="M1301.5 399.6 L1296.6 399.6 L1296.6 408.4 L1305.4 408.4 L1305.4 403.5" fill="none" stroke="#000" stroke-width="1.3" /><line x1="1300.3" y1="404.7" x2="1306.5" y2="398.5" stroke="#000" stroke-width="1.4" stroke-linecap="butt"/><path d="M1303.7 397 L1308 397 L1308 401.3 Z" fill="#000" /></svg>
<svg style="left:1320px;top:396px" width="14" height="14" viewBox="1320 396 14 14" ><line x1="1322" y1="398" x2="1332" y2="408" stroke="#000" stroke-width="1.15" stroke-linecap="butt"/><line x1="1332" y1="398" x2="1322" y2="408" stroke="#000" stroke-width="1.15" stroke-linecap="butt"/></svg>
<svg style="left:777px;top:835px" width="16" height="10" viewBox="777 835 16 10" ><path d="M779 837 L785 843 L791 837" fill="none" stroke="#000" stroke-width="1.15" /></svg>
<svg style="left:803px;top:832px" width="14" height="14" viewBox="803 832 14 14" ><line x1="805" y1="834" x2="815" y2="844" stroke="#000" stroke-width="1.15" stroke-linecap="butt"/><line x1="815" y1="834" x2="805" y2="844" stroke="#000" stroke-width="1.15" stroke-linecap="butt"/></svg>
<svg style="left:829px;top:831px" width="18" height="18" viewBox="829 831 18 18" ><path d="M836.5 835.6 L831.6 835.6 L831.6 844.4 L840.4 844.4 L840.4 839.5" fill="none" stroke="#000" stroke-width="1.3" /><line x1="835.3" y1="840.7" x2="841.5" y2="834.5" stroke="#000" stroke-width="1.4" stroke-linecap="butt"/><path d="M838.7 833 L843 833 L843 837.3 Z" fill="#000" /></svg>
<svg style="left:855px;top:831px" width="13" height="16" viewBox="855 831 13 16" ><path d="M857 838.6 A4.3 4.3 0 0 1 863.6 835.2 M865 839.4 A4.3 4.3 0 0 1 858.4 842.8" fill="none" stroke="#7d7d7d" stroke-width="1.1" /><path d="M861.6 833 L864.2 835.4 L861.2 836.8" fill="none" stroke="#7d7d7d" stroke-width="1.1" /><path d="M860.4 845 L857.8 842.6 L860.8 841.2" fill="none" stroke="#7d7d7d" stroke-width="1.1" /></svg>
<svg style="left:651px;top:887px" width="16" height="16" viewBox="651 887 16 16" ><rect x="652.2" y="889.2" width="13.6" height="12.6" fill="#fdfdfd" rx="1"/><rect x="655.4" y="888" width="2.2" height="2" fill="#fdfdfd"/><rect x="660.4" y="888" width="2.2" height="2" fill="#fdfdfd"/><rect x="653.5" y="890.5" width="11" height="10" fill="#fff" stroke="#000" stroke-width="1.12"/><line x1="654" y1="892.5" x2="664" y2="892.5" stroke="#000" stroke-width="1.0" stroke-linecap="butt"/><line x1="656.5" y1="888.8" x2="656.5" y2="892.2" stroke="#000" stroke-width="1.1" stroke-linecap="butt"/><line x1="661.5" y1="888.8" x2="661.5" y2="892.2" stroke="#000" stroke-width="1.1" stroke-linecap="butt"/><path d="M657 896.6 L658.5 898 L661.6 894.8" fill="none" stroke="#000" stroke-width="1.15" /></svg>
<svg style="left:676px;top:887px" width="16" height="16" viewBox="676 887 16 16" ><rect x="677.2" y="889.2" width="13.6" height="12.6" fill="#fdfdfd" rx="1"/><rect x="680.4" y="888" width="2.2" height="2" fill="#fdfdfd"/><rect x="685.4" y="888" width="2.2" height="2" fill="#fdfdfd"/><rect x="678.5" y="890.5" width="11" height="10" fill="#fff" stroke="#000" stroke-width="1.12"/><line x1="679" y1="892.5" x2="689" y2="892.5" stroke="#000" stroke-width="1.0" stroke-linecap="butt"/><line x1="681.5" y1="888.8" x2="681.5" y2="892.2" stroke="#000" stroke-width="1.1" stroke-linecap="butt"/><line x1="686.5" y1="888.8" x2="686.5" y2="892.2" stroke="#000" stroke-width="1.1" stroke-linecap="butt"/><circle cx="684.5" cy="894.5" r="0.55" fill="#000"/><circle cx="686.5" cy="894.5" r="0.55" fill="#000"/><circle cx="680.5" cy="896.5" r="0.55" fill="#000"/><circle cx="682.5" cy="896.5" r="0.55" fill="#000"/><circle cx="684.5" cy="896.5" r="0.55" fill="#000"/><circle cx="686.5" cy="896.5" r="0.55" fill="#000"/><circle cx="680.5" cy="898.5" r="0.55" fill="#000"/><circle cx="682.5" cy="898.5" r="0.55" fill="#000"/><circle cx="684.5" cy="898.5" r="0.55" fill="#000"/></svg>
<svg style="left:651px;top:912px" width="16" height="16" viewBox="651 912 16 16" ><rect x="652.2" y="914.2" width="13.6" height="12.6" fill="#fdfdfd" rx="1"/><rect x="655.4" y="913" width="2.2" height="2" fill="#fdfdfd"/><rect x="660.4" y="913" width="2.2" height="2" fill="#fdfdfd"/><rect x="653.5" y="915.5" width="11" height="10" fill="#fff" stroke="#000" stroke-width="1.12"/><line x1="654" y1="917.5" x2="664" y2="917.5" stroke="#000" stroke-width="1.0" stroke-linecap="butt"/><line x1="656.5" y1="913.8" x2="656.5" y2="917.2" stroke="#000" stroke-width="1.1" stroke-linecap="butt"/><line x1="661.5" y1="913.8" x2="661.5" y2="917.2" stroke="#000" stroke-width="1.1" stroke-linecap="butt"/><path d="M657 921.6 L658.5 923 L661.6 919.8" fill="none" stroke="#000" stroke-width="1.15" /></svg>
<svg style="left:676px;top:912px" width="16" height="16" viewBox="676 912 16 16" ><rect x="677.2" y="914.2" width="13.6" height="12.6" fill="#fdfdfd" rx="1"/><rect x="680.4" y="913" width="2.2" height="2" fill="#fdfdfd"/><rect x="685.4" y="913" width="2.2" height="2" fill="#fdfdfd"/><rect x="678.5" y="915.5" width="11" height="10" fill="#fff" stroke="#000" stroke-width="1.12"/><line x1="679" y1="917.5" x2="689" y2="917.5" stroke="#000" stroke-width="1.0" stroke-linecap="butt"/><line x1="681.5" y1="913.8" x2="681.5" y2="917.2" stroke="#000" stroke-width="1.1" stroke-linecap="butt"/><line x1="686.5" y1="913.8" x2="686.5" y2="917.2" stroke="#000" stroke-width="1.1" stroke-linecap="butt"/><circle cx="684.5" cy="919.5" r="0.55" fill="#000"/><circle cx="686.5" cy="919.5" r="0.55" fill="#000"/><circle cx="680.5" cy="921.5" r="0.55" fill="#000"/><circle cx="682.5" cy="921.5" r="0.55" fill="#000"/><circle cx="684.5" cy="921.5" r="0.55" fill="#000"/><circle cx="686.5" cy="921.5" r="0.55" fill="#000"/><circle cx="680.5" cy="923.5" r="0.55" fill="#000"/><circle cx="682.5" cy="923.5" r="0.55" fill="#000"/><circle cx="684.5" cy="923.5" r="0.55" fill="#000"/></svg>
<svg style="left:3px;top:972px" width="11" height="11" viewBox="3 972 11 11" ><path d="M10.6 974.4 L6.2 977.5 L10.6 980.6" fill="none" stroke="#404040" stroke-width="2.1" /></svg>
<svg style="left:425px;top:972px" width="11" height="11" viewBox="425 972 11 11" ><path d="M428.4 974.4 L432.8 977.5 L428.4 980.6" fill="none" stroke="#404040" stroke-width="2.1" /></svg>
<svg style="left:3px;top:1021px" width="16" height="16" viewBox="3 1021 16 16" ><g transform="rotate(-45 11 1029)"><ellipse cx="11" cy="1029" rx="5.1" ry="3.2" fill="none" stroke="#8c8c8c" stroke-width="1"/><line x1="3.6" y1="1029" x2="5.9" y2="1029" stroke="#8c8c8c" stroke-width="1" stroke-linecap="butt"/><line x1="16.1" y1="1029" x2="18.4" y2="1029" stroke="#8c8c8c" stroke-width="1" stroke-linecap="butt"/><line x1="9.4" y1="1026.1" x2="9.4" y2="1031.9" stroke="#8c8c8c" stroke-width="0.8" stroke-linecap="butt"/><line x1="11" y1="1025.8" x2="11" y2="1032.2" stroke="#8c8c8c" stroke-width="0.8" stroke-linecap="butt"/><line x1="12.6" y1="1026.1" x2="12.6" y2="1031.9" stroke="#8c8c8c" stroke-width="0.8" stroke-linecap="butt"/></g></svg>
<svg style="left:384px;top:1020px" width="18" height="18" viewBox="384 1020 18 18" ><circle cx="390.9" cy="1025.3" r="3" fill="none" stroke="#8c8c8c" stroke-width="1"/><path d="M386.2 1032.8 C386.4 1030.6 387.6 1029.2 389.4 1028.6" fill="none" stroke="#8c8c8c" stroke-width="1" /><circle cx="395.9" cy="1032" r="3.3" fill="#f5f5f5" stroke="#8c8c8c" stroke-width="1"/><path d="M394.2 1031.4 L395.9 1033 L397.6 1031.4" fill="none" stroke="#8c8c8c" stroke-width="1" /></svg>
<span class="t f12" style="left:22.6px;top:5px;letter-spacing:-0.241px;">BeeCollect</span>
<span class="t f12" style="left:81.7px;top:5px;letter-spacing:-0.147px;">Professional</span>
<span class="t f12" style="left:148.6px;top:5px;letter-spacing:-0.511px;">1.5.18.1</span>
<span class="t" style="left:46.2px;top:32px;letter-spacing:0.156px;">Welcome</span>
<span class="t b" style="left:193.9px;top:32px;letter-spacing:-0.094px;">Ausstellung</span>
<span class="t f12 w" style="left:3.4px;top:58px;letter-spacing:-0.082px;">Ausstellung</span>
<span class="t f12 w" style="left:67.4px;top:58px;letter-spacing:0.167px;">|</span>
<span class="t f12 w" style="left:73.3px;top:58px;letter-spacing:-1.050px;">ID</span>
<span class="t f12 w" style="left:87.9px;top:58px;letter-spacing:-0.830px;">42</span>
<span class="t f12 w" style="left:1061.7px;top:58px;letter-spacing:-0.124px;">Schreiben</span>
<span class="t f12 w u" style="left:1150.5px;top:58px;letter-spacing:-0.391px;">MW | 29.03.2019</span>
<span class="t f12 w u" style="left:1272.3px;top:58px;letter-spacing:0.036px;">Neueingabe</span>
<span class="t" style="left:6.2px;top:86px;letter-spacing:0.338px;">Ausstellungstyp</span>
<span class="t" style="left:6.2px;top:110px;letter-spacing:0.408px;">Ausstellungstitel</span>
<span class="t" style="left:6.2px;top:158px;letter-spacing:0.363px;">Ausstellungsort</span>
<span class="t" style="left:5.7px;top:206px;letter-spacing:0.738px;">Gattung</span>
<span class="t" style="left:125.4px;top:86px;letter-spacing:0.725px;">Im Haus</span>
<span class="t" style="left:126.3px;top:110px;letter-spacing:0.453px;">Alte Meister</span>
<span class="t" style="left:125.6px;top:158px;letter-spacing:0.496px;">Berlin</span>
<span class="t" style="left:676.9px;top:86px;letter-spacing:-0.061px;">Jahr</span>
<span class="t" style="left:676.4px;top:110px;letter-spacing:0.514px;">Datum von</span>
<span class="t" style="left:676.4px;top:134px;letter-spacing:0.384px;">Datum bis</span>
<span class="t" style="left:676.6px;top:158px;letter-spacing:0.238px;">Status</span>
<span class="t" style="left:676.4px;top:182px;letter-spacing:0.266px;">Leihgesuch Nr.</span>
<span class="t" style="left:676.6px;top:230px;letter-spacing:0.238px;">Status</span>
<span class="t" style="left:796.5px;top:86px;letter-spacing:-0.012px;">01.03.2017</span>
<span class="t" style="left:854.5px;top:86px;letter-spacing:2.364px;">-</span>
<span class="t" style="left:861.8px;top:86px;letter-spacing:-0.032px;">31.08.2018</span>
<span class="t" style="left:796.5px;top:110px;letter-spacing:-0.012px;">01.03.2017</span>
<span class="t" style="left:796.4px;top:134px;letter-spacing:0.002px;">31.08.2018</span>
<span class="t" style="left:4.8px;top:258px;letter-spacing:0.380px;">Ausstellungsobjekte</span>
<span class="t" style="left:120.3px;top:258px;letter-spacing:0.286px;">Zusatzdaten</span>
<span class="t i g" style="left:469.2px;top:284px;letter-spacing:-0.329px;">Aob Id</span>
<span class="t g" style="left:513.7px;top:284px;letter-spacing:0.109px;">194</span>
<span class="t" style="left:575.0px;top:284px;letter-spacing:0.543px;">Grunddaten</span>
<span class="t" style="left:648.5px;top:284px;letter-spacing:0.684px;">Bedingungen</span>
<span class="t" style="left:730.4px;top:284px;letter-spacing:0.228px;">Zusatzdaten 1</span>
<span class="t" style="left:813.8px;top:284px;letter-spacing:0.231px;">Zusatzdaten 2</span>
<span class="t" style="left:896.4px;top:284px;letter-spacing:0.253px;">Zusatzdaten 3</span>
<span class="t" style="left:980.5px;top:284px;letter-spacing:0.159px;">Zusatzdaten 4</span>
<span class="t b" style="left:43.4px;top:306px;letter-spacing:-0.168px;">Ausstellungsstruktur</span>
<span class="t" style="left:61.7px;top:322px;letter-spacing:-0.025px;">1. Stock, Raum 1.1</span>
<span class="t" style="left:61.7px;top:338px;letter-spacing:0.027px;">1. Stock, Raum 1.2</span>
<span class="t" style="left:62.1px;top:354px;letter-spacing:-0.092px;">2. Stock, Saal 2.1</span>
<span class="t" style="left:62.1px;top:434px;letter-spacing:-0.041px;">2. Stock, Saal 2.2</span>
<span class="t" style="left:451.6px;top:314px;letter-spacing:-0.918px;">Typ</span>
<span class="t" style="left:451.3px;top:339px;letter-spacing:0.261px;">Entsch.</span>
<span class="t" style="left:451.3px;top:364px;letter-spacing:0.217px;">Entsch. Datum</span>
<span class="t" style="left:452.0px;top:395px;letter-spacing:0.394px;">Ausstellungsobjekt</span>
<span class="t" style="left:451.3px;top:800px;letter-spacing:0.221px;">Bereich</span>
<span class="t" style="left:451.9px;top:831px;letter-spacing:0.096px;">Vers. Wert</span>
<span class="t" style="left:451.3px;top:856px;letter-spacing:0.555px;">Leihgebühr</span>
<span class="t" style="left:451.9px;top:887px;letter-spacing:-0.002px;">Vers. Deck. Von</span>
<span class="t" style="left:451.9px;top:912px;letter-spacing:0.066px;">Vers. Deckung Bis</span>
<span class="t" style="left:451.3px;top:943px;letter-spacing:0.394px;">Katalog Nr.</span>
<span class="t" style="left:451.3px;top:968px;letter-spacing:0.316px;">Raum</span>
<span class="t" style="left:571.6px;top:339px;letter-spacing:0.480px;">Positiv</span>
<span class="t" style="left:572.0px;top:364px;letter-spacing:-0.124px;">22.09.2018</span>
<span class="t" style="left:572.1px;top:395px;letter-spacing:0.486px;">AM 2016/11,</span>
<span class="t" style="left:640.8px;top:395px;letter-spacing:0.533px;">Diego</span>
<span class="t" style="left:675.1px;top:395px;letter-spacing:0.108px;">Velàzquez</span>
<span class="t" style="left:729.5px;top:395px;letter-spacing:0.025px;">(1599 - 1660),</span>
<span class="t" style="left:801.4px;top:395px;letter-spacing:0.203px;">Eine</span>
<span class="t" style="left:827.1px;top:395px;letter-spacing:0.404px;">alte</span>
<span class="t" style="left:849.1px;top:395px;letter-spacing:0.011px;">Frau</span>
<span class="t" style="left:874.7px;top:395px;letter-spacing:0.356px;">brät</span>
<span class="t" style="left:898.4px;top:395px;letter-spacing:0.021px;">Eier,</span>
<span class="t" style="left:923.7px;top:395px;letter-spacing:0.750px;">ca.</span>
<span class="t" style="left:942.3px;top:395px;letter-spacing:-0.090px;">1618</span>
<span class="t" style="left:572.1px;top:425px;letter-spacing:0.031px;">Adresse</span>
<span class="t" style="left:616.2px;top:425px;letter-spacing:0.615px;">Sammlung:</span>
<span class="t" style="left:679.9px;top:425px;letter-spacing:0.386px;">Scottish</span>
<span class="t" style="left:725.1px;top:425px;letter-spacing:0.256px;">National</span>
<span class="t" style="left:772.2px;top:425px;letter-spacing:0.235px;">Gallery,</span>
<span class="t" style="left:814.1px;top:425px;letter-spacing:0.464px;">Edinburgh,</span>
<span class="t" style="left:876.2px;top:425px;letter-spacing:0.466px;">Großbritannien</span>
<span class="t" style="left:571.8px;top:800px;letter-spacing:0.429px;">Exhibition</span>
<span class="t" style="left:627.2px;top:800px;letter-spacing:0.654px;">objects/Barock/2.</span>
<span class="t" style="left:725.0px;top:800px;letter-spacing:-0.101px;">Stock,</span>
<span class="t" style="left:758.0px;top:800px;letter-spacing:-0.093px;">Saal</span>
<span class="t" style="left:782.1px;top:800px;letter-spacing:-0.580px;">1.1</span>
<span class="t f12" style="left:25.6px;top:1022px;letter-spacing:0.022px;">Verbunden</span>
<span class="t f12" style="left:86.2px;top:1022px;letter-spacing:0.600px;">mit:</span>
<span class="t f12" style="left:109.8px;top:1022px;letter-spacing:-0.364px;">bc_dev_test</span>
<span class="t f12" style="left:207.5px;top:1022px;letter-spacing:-1.050px;">DB</span>
<span class="t f12" style="left:226.8px;top:1022px;letter-spacing:-0.460px;">Version:</span>
<span class="t f12" style="left:269.7px;top:1022px;letter-spacing:-1.050px;">BC</span>
<span class="t f12" style="left:288.1px;top:1022px;letter-spacing:-0.684px;">001.005.018</span>
<span class="t f12" style="left:407.8px;top:1022px;letter-spacing:-0.119px;">Angemeldet</span>
<span class="t f12" style="left:475.2px;top:1022px;letter-spacing:-0.146px;">als:</span>
<span class="t f12" style="left:495.7px;top:1022px;letter-spacing:-0.782px;">SOL_MU</span>
<div id="treeclip" style="left:0;top:303px;width:439px;height:666px;overflow:hidden">
<span class="t" style="left:81.1px;top:67px;letter-spacing:0.004px;">AM 2016/14,</span>
<span class="t" style="left:146.5px;top:67px;letter-spacing:-0.190px;">Peter</span>
<span class="t" style="left:175.8px;top:67px;letter-spacing:-0.453px;">Paul</span>
<span class="t" style="left:200.1px;top:67px;letter-spacing:0.135px;">Rubens</span>
<span class="t" style="left:242.9px;top:67px;letter-spacing:-0.210px;">(1577 - 1640),</span>
<span class="t" style="left:312.4px;top:67px;letter-spacing:0.256px;">Landschaft</span>
<span class="t" style="left:372.2px;top:67px;letter-spacing:0.084px;">mit</span>
<span class="t" style="left:390.1px;top:67px;letter-spacing:0.510px;">Kühen</span>
<span class="t" style="left:427.7px;top:67px;letter-spacing:0.000px;">und Entenjägern, um 1636</span>
<span class="t" style="left:81.1px;top:83px;letter-spacing:0.030px;">AM 2016/2,</span>
<span class="t" style="left:140.6px;top:83px;letter-spacing:0.483px;">Michelangelo</span>
<span class="t" style="left:213.8px;top:83px;letter-spacing:0.142px;">Caravaggio</span>
<span class="t" style="left:274.5px;top:83px;letter-spacing:-0.176px;">(1571 - 1610),</span>
<span class="t" style="left:344.5px;top:83px;letter-spacing:-0.147px;">Amor</span>
<span class="t" style="left:373.9px;top:83px;letter-spacing:-0.851px;">als</span>
<span class="t" style="left:389.6px;top:83px;letter-spacing:0.174px;">Sieger,</span>
<span class="t" style="left:430.2px;top:83px;letter-spacing:0.000px;">um 1602</span>
<span class="t w" style="left:81.1px;top:99px;letter-spacing:0.078px;">AM 2016/11,</span>
<span class="t w" style="left:146.5px;top:99px;letter-spacing:0.494px;">Diego</span>
<span class="t w" style="left:180.7px;top:99px;letter-spacing:0.227px;">Velàzquez</span>
<span class="t w" style="left:236.2px;top:99px;letter-spacing:-0.140px;">(1599 - 1660),</span>
<span class="t w" style="left:305.8px;top:99px;letter-spacing:-0.031px;">Eine</span>
<span class="t w" style="left:331.1px;top:99px;letter-spacing:-0.017px;">alte</span>
<span class="t w" style="left:352.6px;top:99px;letter-spacing:-0.118px;">Frau</span>
<span class="t w" style="left:377.7px;top:99px;letter-spacing:0.066px;">brät</span>
<span class="t w" style="left:400.8px;top:99px;letter-spacing:0.507px;">Eier,</span>
<span class="t w" style="left:428.5px;top:99px;letter-spacing:0.000px;">ca. 1618</span>
<span class="t" style="left:81.1px;top:115px;letter-spacing:0.004px;">AM 2016/10,</span>
<span class="t" style="left:146.5px;top:115px;letter-spacing:0.335px;">Rembrandt</span>
<span class="t" style="left:206.9px;top:115px;letter-spacing:-0.047px;">Harmenszoon</span>
<span class="t" style="left:280.1px;top:115px;letter-spacing:-0.815px;">van</span>
<span class="t" style="left:300.1px;top:115px;letter-spacing:0.899px;">Rijn</span>
<span class="t" style="left:324.5px;top:115px;letter-spacing:-0.176px;">(1606 - 1669),</span>
<span class="t" style="left:394.4px;top:115px;letter-spacing:0.232px;">Die</span>
<span class="t" style="left:416.0px;top:115px;letter-spacing:0.000px;">Vorsteher der Tuchmacherzunft, 1662</span>
</div>
</div></body></html>
